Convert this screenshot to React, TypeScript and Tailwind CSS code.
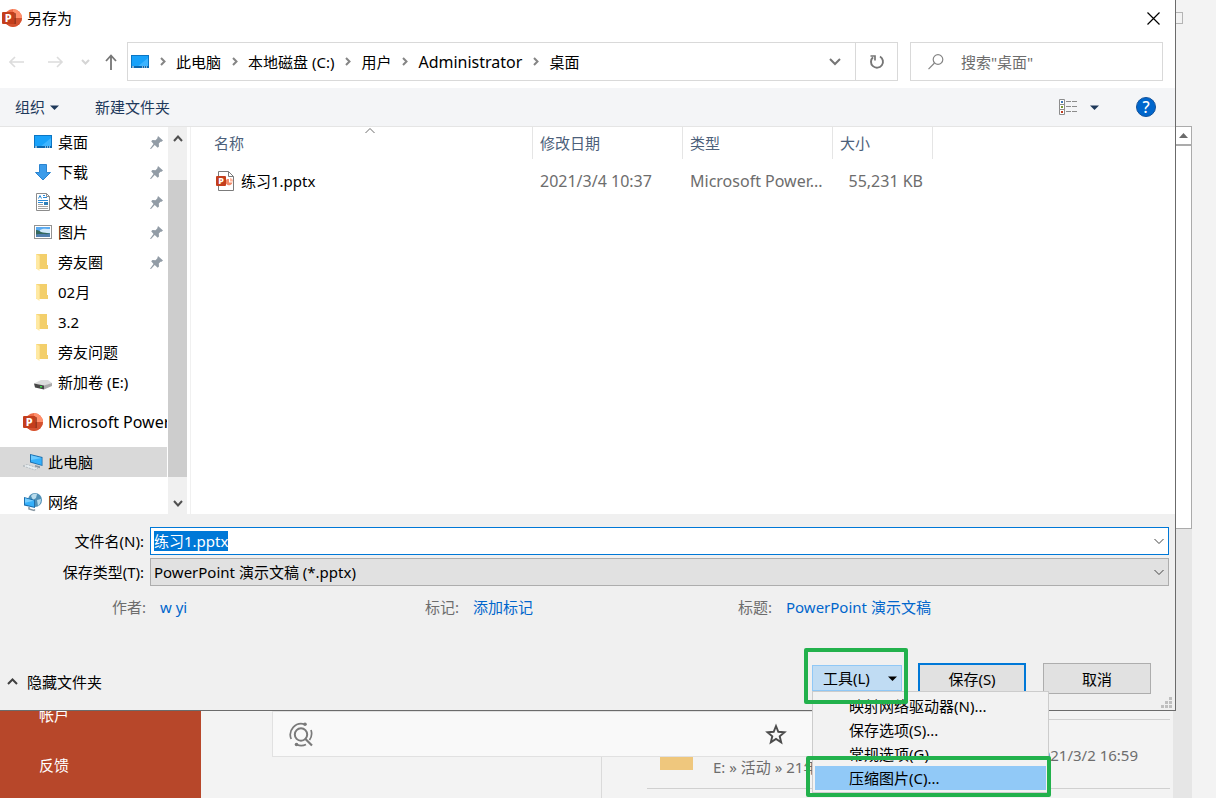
import { useEffect, useRef, type ReactNode } from "react";

function PowerPointIcon() {
  return (
    <svg width="20" height="20" viewBox="0 0 20 20" className="shrink-0" aria-hidden="true">
      <circle cx="11" cy="10" r="9" fill="#ed6c47" />
      <path d="M11 1a9 9 0 0 1 9 9h-9z" fill="#ff8f6b" />
      <path d="M2 10h18a9 9 0 0 1-18 0z" fill="#d35230" />
      <path d="M5 5h8a1 1 0 0 1 1 1v10H5z" fill="#7a2a16" opacity="0.65" />
      <rect x="0" y="4" width="12.5" height="12" rx="1" fill="#c43e1c" />
      <text x="6.2" y="13.8" textAnchor="middle" fontSize="11" fontWeight="800" fill="#fff">
        P
      </text>
    </svg>
  );
}

function PptxFileIcon() {
  return (
    <svg width="19" height="20" viewBox="0 0 19 20" className="shrink-0" aria-hidden="true">
      <path d="M2.5 0.5h10l5 5v14h-15z" fill="#fff" stroke="#7b7b7b" />
      <path d="M12.5 0.5v5h5" fill="none" stroke="#7b7b7b" />
      <path d="M13 8v3.5h3.5A3.5 3.5 0 1 1 11 8z" fill="#f28b6b" />
      <path d="M14 7A3.5 3.500 0 0 1 17 10.5h-3z" fill="#ffb59b" />
      <rect x="0" y="5" width="10" height="10" rx="1" fill="#c43e1c" />
      <text x="5" y="13" textAnchor="middle" fontSize="9" fontWeight="800" fill="#fff">
        P
      </text>
    </svg>
  );
}

function DesktopIcon() {
  return (
    <svg width="18" height="14" viewBox="0 0 18 14" className="shrink-0" aria-hidden="true">
      <rect x="0.5" y="0.5" width="17" height="12" fill="#18a2fa" stroke="#0b76c4" />
      <path d="M6 12 17 3v9z" fill="#3db4ff" />
      <rect x="0" y="11" width="18" height="2" fill="#0b68b0" />
      <path d="M1 12h2M11 12h1M13 12h1M15 12h1" stroke="#fff" />
    </svg>
  );
}

function DownloadIcon() {
  return (
    <svg width="18" height="18" viewBox="0 0 18 18" className="shrink-0" aria-hidden="true">
      <path d="M5.5 1.5h7v8h4L9 17 1.5 9.5h4z" fill="#3c9cea" stroke="#2b84d0" />
    </svg>
  );
}

function DocumentIcon() {
  return (
    <svg width="18" height="18" viewBox="0 0 18 18" className="shrink-0" aria-hidden="true">
      <path d="M2.5 0.5h10l3 3v14h-13z" fill="#fff" stroke="#8c8c8c" />
      <path d="M12.5 0.5v3h3" fill="none" stroke="#8c8c8c" />
      <path
        d="M4.5 5.5 6 2.5l1.5 3M9 2.5h2M9 4.5h4M4 7.5h10M4 9.5h5"
        stroke="#2b8ad6"
        fill="none"
      />
      <path d="M4 11.5h5M4 13.5h10M4 15.5h10" stroke="#a3a3a3" />
      <rect x="10" y="9" width="4" height="3" fill="#2f7fb8" />
    </svg>
  );
}

function PictureIcon() {
  return (
    <svg width="18" height="14" viewBox="0 0 18 14" className="shrink-0" aria-hidden="true">
      <rect x="0.5" y="0.5" width="17" height="13" fill="#fff" stroke="#939393" />
      <rect x="2" y="2" width="14" height="10" fill="#5aaaf0" />
      <path d="M6 5c3-2 7-1 10-1v4H6z" fill="#d3eafb" />
      <path d="M2 5c3 0 4 2 7 2.5 3 0.5 5 0.5 7 1V10H2z" fill="#35695f" />
      <path d="M2 9.5c5-1 9 0 14-0.5v3H2z" fill="#527fae" />
    </svg>
  );
}

function FolderIcon() {
  return (
    <svg width="18" height="18" viewBox="0 0 18 18" className="shrink-0" aria-hidden="true">
      <path d="M2 1h11v11h1v4H2z" fill="#f6d67a" />
      <path d="M6 1h7v11h1v4H6z" fill="#f3cf6b" />
      <path d="M2 1l3.5 2v15L2 15.5z" fill="#ffe9a2" />
    </svg>
  );
}

function DriveIcon() {
  return (
    <svg width="18" height="18" viewBox="0 0 18 18" className="shrink-0" aria-hidden="true">
      <path d="M0 10.5 7 7h7l4 3-8 3z" fill="#dcdcdc" />
      <path d="M0 10.5 10 12.5v4L1 14.5z" fill="#474747" />
      <path d="M10 12.5l8-2.5v3l-8 3.5z" fill="#a9a9a9" />
      <rect x="6" y="13" width="2" height="1.5" fill="#3ddc4a" />
    </svg>
  );
}

function ComputerIcon() {
  return (
    <svg width="20" height="20" viewBox="0 0 20 20" className="shrink-0" aria-hidden="true">
      <path d="M7 2l12.5 3v9L7 10.5z" fill="#1d6fae" />
      <path d="M8 3.3l10.7 2.6v7L8 9.8z" fill="#35b0fb" />
      <path d="M8 3.3l10.7 2.6L8 8z" fill="#6ccaff" />
      <path d="M12 13l5 1.2v2l-5-1.5z" fill="#8f9aa3" />
      <path
        d="M0 14l4-1.5 11 3.5-3 2z"
        fill="#e8edf0"
        stroke="#a5adb3"
        strokeWidth="0.7"
        strokeDasharray="2 1"
      />
    </svg>
  );
}

function NetworkIcon() {
  return (
    <svg width="20" height="20" viewBox="0 0 20 20" className="shrink-0" aria-hidden="true">
      <circle cx="12" cy="8" r="7" fill="#4f8fb5" />
      <path d="M8 4c2-3 5-2 6-2l-1 4-3 2zM14 8l4-1c0 4-2 6-3 7z" fill="#b9dcec" />
      <path d="M1 5l11 3v8L1 13.5z" fill="#1d6fae" />
      <path d="M2 6.3l9 2.4v6L2 12.5z" fill="#35b0fb" />
      <path d="M2 6.3l9 2.4-9 2z" fill="#77ceff" />
      <path d="M6 15v2l5 1.5 1-1" fill="none" stroke="#8797a2" strokeWidth="1.5" />
    </svg>
  );
}

function PinIcon() {
  return (
    <svg width="13" height="13" viewBox="0 0 13 13" className="shrink-0" aria-hidden="true">
      <path
        d="M8 0l5 4.5-1.5 1.2-1 0.1L8.8 7.5l0.2 3-1.3 1.3L4.7 9 1 13l-1-0.3L3.5 8 1.2 5.3 2.5 4l3 0.2L7.2 2.5z"
        fill="#929ca6"
      />
    </svg>
  );
}

type ChevronProps = { d: string; w: number; h: number; color?: string; stroke?: number };

function Chevron({ d, w, h, color = "#6f6f6f", stroke = 2 }: ChevronProps) {
  return (
    <svg width={w} height={h} viewBox={`0 0 ${w} ${h}`} className="shrink-0" aria-hidden="true">
      <path d={d} fill="none" stroke={color} strokeWidth={stroke} />
    </svg>
  );
}

function Caret({ color }: { color: string }) {
  return (
    <svg width="9" height="5" viewBox="0 0 9 5" className="shrink-0" aria-hidden="true">
      <path d="M0 0.5h9L4.5 5z" fill={color} />
    </svg>
  );
}

const crumbs: { label: string; latin?: boolean }[] = [
  { label: "此电脑" },
  { label: "本地磁盘 (C:)" },
  { label: "用户" },
  { label: "Administrator", latin: true },
  { label: "桌面" },
];

const places: { label: string; icon: ReactNode; pinned?: boolean }[] = [
  { label: "桌面", icon: <DesktopIcon />, pinned: true },
  { label: "下载", icon: <DownloadIcon />, pinned: true },
  { label: "文档", icon: <DocumentIcon />, pinned: true },
  { label: "图片", icon: <PictureIcon />, pinned: true },
  { label: "旁友圈", icon: <FolderIcon />, pinned: true },
  { label: "02月", icon: <FolderIcon /> },
  { label: "3.2", icon: <FolderIcon /> },
  { label: "旁友问题", icon: <FolderIcon /> },
  { label: "新加卷 (E:)", icon: <DriveIcon /> },
];

const roots: { label: string; icon: ReactNode; selected?: boolean; latin?: boolean }[] = [
  { label: "Microsoft PowerPoint", icon: <PowerPointIcon />, latin: true },
  { label: "此电脑", icon: <ComputerIcon />, selected: true },
  { label: "网络", icon: <NetworkIcon /> },
];

const details = [
  { label: "作者:", value: "w yi" },
  { label: "标记:", value: "添加标记" },
  { label: "标题:", value: "PowerPoint 演示文稿" },
];

const tools = ["映射网络驱动器(N)...", "保存选项(S)...", "常规选项(G)...", "压缩图片(C)..."];

function TitleBar() {
  return (
    <header className="flex h-9 shrink-0 items-center gap-[5px] pr-[15px] pl-0.5">
      <PowerPointIcon />
      <h1 className="flex-1">另存为</h1>
      <button aria-label="关闭" className="flex">
        <svg width="13" height="13" viewBox="0 0 13 13" aria-hidden="true">
          <path d="M0.5 0.5l12 12M12.5 0.5l-12 12" stroke="#000" strokeWidth="1.2" />
        </svg>
      </button>
    </header>
  );
}

function NavigationBar() {
  return (
    <nav aria-label="位置" className="flex shrink-0 items-center pt-1.5 pr-3 pb-[7px]">
      <div className="flex w-[127px] shrink-0 items-center pl-[9px]">
        <button aria-label="后退" className="flex">
          <svg width="16" height="12" viewBox="0 0 16 12" aria-hidden="true">
            <path d="M15 6H1M6 1 1 6l5 5" fill="none" stroke="#dcdcdc" strokeWidth="1.6" />
          </svg>
        </button>
        <button aria-label="前进" className="ml-[23px] flex">
          <svg width="16" height="12" viewBox="0 0 16 12" aria-hidden="true">
            <path d="M0 6h14M9 1l5 5-5 5" fill="none" stroke="#dcdcdc" strokeWidth="1.6" />
          </svg>
        </button>
        <button aria-label="最近浏览的位置" className="ml-[17px] flex">
          <Chevron d="M1 1l3.5 3.5L8 1" w={9} h={6} color="#d5d5d5" />
        </button>
        <button aria-label="上移" className="ml-[15px] flex">
          <svg width="12" height="16" viewBox="0 0 12 16" aria-hidden="true">
            <path d="M6 16V1.5M1 7l5-5.5L11 7" fill="none" stroke="#767676" strokeWidth="1.8" />
          </svg>
        </button>
      </div>
      <div className="mr-3 flex h-[39px] flex-1 border border-[#d9d9d9]">
        <div className="flex flex-1 items-center pl-[3px]">
          <DesktopIcon />
          {crumbs.map((crumb) => (
            <span key={crumb.label} className="flex items-center">
              <span className="flex w-[27px] justify-center">
                <Chevron d="M1 1l3.5 3.5L1 8" w={6} h={9} color="#858585" />
              </span>
              <a href="#path" className={crumb.latin ? "text-base leading-5" : "leading-5"}>
                {crumb.label}
              </a>
            </span>
          ))}
        </div>
        <button aria-label="以前的位置" className="flex w-10 items-center justify-center">
          <Chevron d="M1 1l5 5 5-5" w={12} h={8} color="#767676" />
        </button>
        <button
          aria-label="刷新"
          className="flex w-[42px] items-center justify-center border-l border-[#d9d9d9]"
        >
          <svg width="16" height="16" viewBox="0 0 16 16" aria-hidden="true">
            <path d="M11 2.5A6 6 0 1 1 4 3.2" fill="none" stroke="#767676" strokeWidth="1.9" />
            <path d="M1.5 2H6v4.5" fill="none" stroke="#767676" strokeWidth="1.7" />
          </svg>
        </button>
      </div>
      <label className="flex h-[39px] w-[253px] items-center gap-[17px] border border-[#d9d9d9] pl-[17px]">
        <svg width="16" height="16" viewBox="0 0 16 16" className="shrink-0" aria-hidden="true">
          <circle cx="10" cy="5.5" r="4.8" fill="none" stroke="#858585" strokeWidth="1.2" />
          <path d="M6.5 9 0.5 15.2" stroke="#858585" strokeWidth="1.2" />
        </svg>
        <input
          aria-label="搜索"
          placeholder={'搜索"桌面"'}
          className="w-full min-w-0 outline-none placeholder:text-[#6d6d6d] placeholder:opacity-100"
        />
      </label>
    </nav>
  );
}

function Toolbar() {
  return (
    <div className="flex h-[39px] shrink-0 items-center border-b border-[#e5e5e5] bg-[#f4f5f7] pr-[19px] pl-[15px] text-[#1e395b]">
      <button className="flex items-center gap-[5px]">
        组织
        <Caret color="#1e395b" />
      </button>
      <button className="ml-9">新建文件夹</button>
      <button aria-label="更改视图" className="ml-auto flex items-center gap-3">
        <svg width="19" height="17" viewBox="0 0 19 17" aria-hidden="true">
          <path
            d="M0.5 0.5h5v5h-5zM0.5 5.5h5v5h-5zM0.5 10.5h5v5h-5z"
            fill="#fff"
            stroke="#8c8c8c"
          />
          <path d="M7 2.5h5M13 2.5h5M7 7.5h5M13 7.5h5M7 12.5h5M13 12.5h5" stroke="#8c8c8c" />
          <rect x="2" y="2" width="2" height="2" fill="#3c78b8" />
          <rect x="2" y="7" width="2" height="2" fill="#7b9c32" />
          <rect x="2" y="12" width="2" height="2" fill="#c03c20" />
        </svg>
        <Caret color="#1e395b" />
      </button>
      <button
        aria-label="帮助"
        className="ml-[37px] flex h-5 w-5 items-center justify-center rounded-full border border-[#11519b] bg-[#0066cc] text-base leading-5 font-medium text-white"
      >
        ?
      </button>
    </div>
  );
}

function Sidebar() {
  return (
    <aside className="flex w-[191px] shrink-0 border-r border-[#f0f0f0]">
      <ul className="min-w-0 flex-1 overflow-hidden">
        {places.map((place) => (
          <li key={place.label} className="flex h-[30px] items-center gap-1.5 pr-[5px] pl-[34px]">
            {place.icon}
            <a href="#place" className="flex-1 whitespace-nowrap">
              {place.label}
            </a>
            {place.pinned && <PinIcon />}
          </li>
        ))}
        {roots.map((root) => (
          <li
            key={root.label}
            className={
              root.selected
                ? "mt-2.5 mr-px flex h-[30px] items-center gap-[5px] overflow-hidden bg-[#d9d9d9] pl-[23px]"
                : "mt-2.5 mr-px flex h-[30px] items-center gap-[5px] overflow-hidden pl-[23px]"
            }
          >
            {root.icon}
            <a
              href="#place"
              className={
                root.latin
                  ? "text-base leading-5 whitespace-nowrap"
                  : "leading-5 whitespace-nowrap"
              }
            >
              {root.label}
            </a>
          </li>
        ))}
      </ul>
      <div className="mr-[3px] flex w-[19px] shrink-0 flex-col items-center bg-[#f0f0f0]">
        <span className="flex h-[53px] pt-2">
          <Chevron d="M1 6l4-4.5L9 6" w={10} h={7} color="#505050" />
        </span>
        <span className="w-full flex-1 bg-[#cdcdcd]" />
        <span className="flex h-[37px] items-end pb-[7px]">
          <Chevron d="M1 1l4 4.5L9 1" w={10} h={7} color="#505050" />
        </span>
      </div>
    </aside>
  );
}

function FileList() {
  return (
    <div className="min-w-0 flex-1">
      <table className="w-[742px] table-fixed border-separate border-spacing-0 text-left">
        <colgroup>
          <col className="w-[342px]" />
          <col className="w-[150px]" />
          <col className="w-[150px]" />
          <col className="w-[100px]" />
        </colgroup>
        <thead>
          <tr className="h-8 text-[#4c607a]">
            <th className="relative border-r border-[#e5e5e5] pl-[23px] font-normal">
              名称
              <span className="absolute top-0 left-[174px] flex">
                <Chevron d="M0.5 6 5 1.5 9.5 6" w={10} h={7} color="#6d6d6d" stroke={1} />
              </span>
            </th>
            <th className="border-r border-[#e5e5e5] pl-[7px] font-normal">修改日期</th>
            <th className="border-r border-[#e5e5e5] pl-[7px] font-normal">类型</th>
            <th className="border-r border-[#e5e5e5] pl-[7px] font-normal">大小</th>
          </tr>
        </thead>
        <tbody>
          <tr className="h-11 text-base leading-5 whitespace-nowrap text-[#6d6d6d]">
            <td className="pl-[25px] text-[15px] text-black">
              <span className="flex items-center gap-1.5">
                <PptxFileIcon />
                练习1.pptx
              </span>
            </td>
            <td className="pl-[7px]">2021/3/4 10:37</td>
            <td className="pl-[7px]">Microsoft Power...</td>
            <td className="pr-2.5 text-right">55,231 KB</td>
          </tr>
        </tbody>
      </table>
    </div>
  );
}

function FileForm() {
  const nameRef = useRef<HTMLInputElement>(null);

  useEffect(() => {
    nameRef.current?.focus();
    nameRef.current?.select();
  }, []);

  return (
    <div className="flex flex-col gap-[3px] pr-1.5">
      <div className="flex items-center">
        <label htmlFor="file-name" className="w-[150px] shrink-0 pr-1.5 text-right">
          文件名(N):
        </label>
        <div className="flex h-7 flex-1 items-center border border-[#0078d7] bg-white pr-1 pl-[3px]">
          <input
            id="file-name"
            ref={nameRef}
            defaultValue="练习1.pptx"
            className="h-5 min-w-0 flex-1 leading-5 outline-none selection:bg-[#0078d7] selection:text-white"
          />
          <button aria-label="展开文件名" className="flex">
            <Chevron d="M0.5 1 5 5.5 9.5 1" w={10} h={7} color="#444444" stroke={1} />
          </button>
        </div>
      </div>
      <div className="flex items-center">
        <label htmlFor="file-type" className="w-[150px] shrink-0 pr-1.5 text-right">
          保存类型(T):
        </label>
        <div className="flex h-7 flex-1 items-center border border-[#adadad] bg-[#e1e1e1] pr-1 pl-[3px]">
          <select id="file-type" className="min-w-0 flex-1 appearance-none outline-none">
            <option>PowerPoint 演示文稿 (*.pptx)</option>
          </select>
          <Chevron d="M0.5 1 5 5.5 9.5 1" w={10} h={7} color="#444444" stroke={1} />
        </div>
      </div>
    </div>
  );
}

function ToolsMenu() {
  return (
    <div className="relative">
      <button className="flex h-[26px] w-[90px] items-center justify-between border border-[#90c8f6] bg-[#c0dcf3] pr-1 pl-2.5">
        工具(L)
        <Caret color="#000000" />
      </button>
      <ul className="absolute top-full left-0 z-10 w-[237px] border border-[#cccccc] bg-[#f2f2f2] p-0.5">
        {tools.map((tool, index) => (
          <li key={tool}>
            <button
              className={
                index === tools.length - 1
                  ? "block h-6 w-full bg-[#91c9f7] pl-[34px] text-left"
                  : "block h-6 w-full pl-[34px] text-left"
              }
            >
              {tool}
            </button>
          </li>
        ))}
      </ul>
      <span className="pointer-events-none absolute -top-[17px] -left-2 z-20 h-[56px] w-[104px] rounded-xs border-4 border-[#22b14c]" />
      <span className="pointer-events-none absolute top-[91px] -left-1.5 z-20 h-[41px] w-[245px] rounded-xs border-4 border-[#22b14c]" />
    </div>
  );
}

function SaveDialog() {
  return (
    <section
      aria-label="另存为"
      className="flex min-w-0 flex-1 flex-col border-r border-b border-[#6b6b6b] bg-white"
    >
      <TitleBar />
      <NavigationBar />
      <Toolbar />
      <div className="flex min-h-0 flex-1">
        <Sidebar />
        <FileList />
      </div>
      <footer className="shrink-0 bg-[#f0f0f0] pt-[13px]">
        <FileForm />
        <dl className="mt-[11px] grid grid-cols-3 pr-[124px] pl-[112px]">
          {details.map((detail) => (
            <div key={detail.label} className="flex">
              <dt className="w-12 shrink-0 text-[#6d6d6d]">{detail.label}</dt>
              <dd className="text-[#0066cc]">{detail.value}</dd>
            </div>
          ))}
        </dl>
        <div className="mt-[46px] flex items-start pr-6">
          <button className="mr-auto ml-[7px] flex h-[38px] items-center gap-[9px]">
            <Chevron d="M1 6l4.5-4.5L10 6" w={11} h={8} color="#404040" />
            隐藏文件夹
          </button>
          <div className="mr-4 pt-0.5">
            <ToolsMenu />
          </div>
          <button className="mr-[17px] h-[31px] w-[108px] border-2 border-[#0078d7] bg-[#e1e1e1]">
            保存(S)
          </button>
          <button className="h-[31px] w-[108px] border border-[#adadad] bg-[#e1e1e1]">取消</button>
        </div>
        <div className="flex h-[9px] items-end justify-end pr-[3px] pb-0.5">
          <svg width="11" height="11" viewBox="0 0 11 11" className="shrink-0" aria-hidden="true">
            <path
              d="M8 0h3v3H8zM4 4h3v3H4zM8 4h3v3H8zM0 8h3v3H0zM4 8h3v3H4zM8 8h3v3H8z"
              fill="#bfbfbf"
            />
          </svg>
        </div>
      </footer>
    </section>
  );
}

function BackstageScrollbar() {
  return (
    <div className="flex w-10 shrink-0 flex-col">
      <div className="h-[126px] pt-3">
        <div className="h-3 w-[7px] border border-l-0 border-[#b4b4b4]" />
      </div>
      <div className="flex w-4 flex-1 flex-col bg-[#e6e6e6]">
        <div className="flex h-[18px] items-center justify-center border-t border-r border-[#ababab] bg-white">
          <svg width="9" height="5" viewBox="0 0 9 5" aria-hidden="true">
            <path d="M0 5 4.5 0 9 5z" fill="#6b6b6b" />
          </svg>
        </div>
        <div className="h-[385px] border border-t-2 border-l-0 border-[#ababab] bg-white" />
      </div>
    </div>
  );
}

function Backstage() {
  return (
    <div className="flex h-[87px] shrink-0 overflow-hidden">
      <nav aria-label="文件" className="w-[201px] shrink-0 bg-[#b7472a] text-white">
        <div className="-mt-[21px] flex flex-col pl-[39px] leading-[50px]">
          <a href="#account">帐户</a>
          <a href="#feedback">反馈</a>
        </div>
      </nav>
      <div className="relative flex min-w-0 flex-1">
        <div className="w-[401px] shrink-0 border-r border-[#dadada]" />
        <div className="min-w-0 flex-1 pt-2 pr-[3px] pl-[45px] text-[#6d6d6d]">
          <div className="flex h-[70px] border-y border-[#d0d0d0] pr-8 pl-[13px]">
            <span className="mt-[22px] h-[28px] w-[33px] bg-[#efc77d]" />
            <span className="mt-[37px] ml-5 flex-1">E: » 活动 » 21年</span>
            <span className="mt-[25px]">2021/3/2 16:59</span>
          </div>
        </div>
        <div className="absolute top-0 left-[71px] flex h-[46px] w-[750px] items-center border border-[#e1e1e1] bg-[#f9f9f9] pl-4">
          <svg width="24" height="25" viewBox="0 0 24 25" aria-hidden="true">
            <g fill="none" stroke="#7a7a7a" strokeWidth="1.7">
              <circle cx="12" cy="12.5" r="6.2" strokeWidth="2" />
              <path d="M2.2 17A11 11 0 0 1 15.5 2.2" />
              <path d="M22 8a11 11 0 0 1-1.5 10" />
              <path d="M8 22.8a11 11 0 0 0 9-0.3" />
              <path d="M16 16.5l7 7" strokeWidth="2.2" />
            </g>
            <circle cx="16" cy="2.3" r="1.8" fill="#7a7a7a" />
            <circle cx="7.5" cy="22.5" r="1.8" fill="#7a7a7a" />
          </svg>
          <svg width="22" height="22" viewBox="0 0 22 22" className="ml-[452px]" aria-hidden="true">
            <path
              d="M11 3l2.3 5.8 6.2 0.5-4.8 4 1.5 6L11 16l-5.2 3.3 1.5-6-4.8-4 6.2-0.5z"
              fill="none"
              stroke="#4c4c4c"
              strokeWidth="1.9"
            />
          </svg>
        </div>
      </div>
      <div className="w-[19px] shrink-0 bg-[#e6e6e6]" />
      <div className="w-6 shrink-0" />
    </div>
  );
}

export default function App() {
  return (
    <main className="flex h-screen min-h-[640px] flex-col overflow-hidden bg-[#f3f3f3] font-['Noto_Sans','Noto_Sans_CJK_SC',sans-serif] text-[15px] leading-5 text-black">
      <div className="relative z-10 flex min-h-0 flex-1">
        <SaveDialog />
        <BackstageScrollbar />
      </div>
      <Backstage />
    </main>
  );
}
